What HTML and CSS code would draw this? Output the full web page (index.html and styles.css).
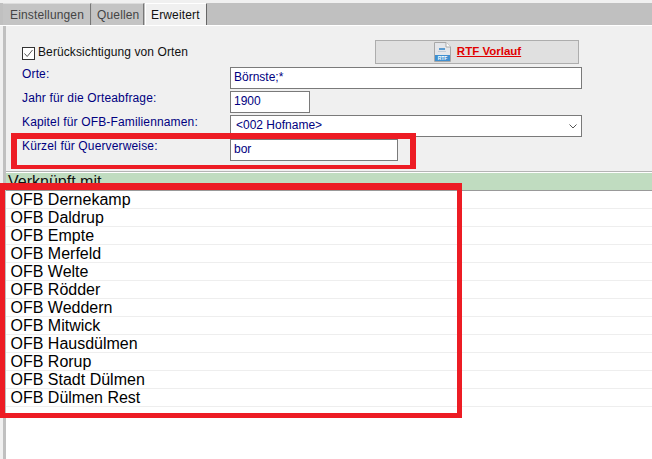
FILE: index.html
```html
<!DOCTYPE html>
<html>

<head>
    <title>Erweitert</title>
    <link rel="stylesheet" href="styles.css">
</head>

<body>
    <div class="tabbar">
        <div class="tab">Einstellungen</div>
        <div class="tab quellen">Quellen</div>
        <div class="tab active">Erweitert</div>
    </div>
    <div class="page">
        <div class="settings">
            <div class="toprow">
                <label class="check">
                    <svg class="checkbox" width="13" height="13" viewBox="0 0 13 13">
                        <rect x="0.5" y="0.5" width="12" height="12" fill="#fff" stroke="#333"></rect>
                        <path d="M2.5 6.5 L5.2 9.5 L10.5 3" fill="none" stroke="#555" stroke-width="1"></path>
                    </svg>
                    <span>Berücksichtigung von Orten</span>
                </label>
                <button class="rtfbutton">
                    <svg width="17" height="20" viewBox="0 0 17 20">
                        <path d="M0.5 0.5 H12 L16.5 5 V19.5 H0.5 Z" fill="#e4e6ea" stroke="#a8a8a8"></path>
                        <path d="M12 0.5 V5 H16.5" fill="#fff" stroke="#a8a8a8"></path>
                        <rect x="5" y="6" width="6" height="2" fill="#5a9bd0"></rect>
                        <rect x="4" y="9" width="8" height="1" fill="#c4ccd6"></rect>
                        <rect x="1" y="13" width="15" height="6" fill="#3f8fd0"></rect>
                        <text x="8.5" y="18" class="icontext">RTF</text>
                    </svg>
                    <span>RTF Vorlauf</span>
                </button>
            </div>
            <div class="field">
                <label>Orte:</label>
                <div class="input wide">Börnste;*</div>
            </div>
            <div class="field">
                <label>Jahr für die Orteabfrage:</label>
                <div class="input short">1900</div>
            </div>
            <div class="field">
                <label>Kapitel für OFB-Familiennamen:</label>
                <div class="input wide select">
                    <span>&lt;002 Hofname&gt;</span>
                    <svg width="8" height="5" viewBox="0 0 8 5">
                        <path d="M0.5 0.5 L4 4 L7.5 0.5" fill="none" stroke="#555" stroke-width="1"></path>
                    </svg>
                </div>
            </div>
            <div class="field">
                <label>Kürzel für Querverweise:</label>
                <div class="input medium">bor</div>
            </div>
        </div>
        <div class="listhead">Verknüpft mit</div>
        <div class="list">
            <div class="row">OFB Dernekamp</div>
            <div class="row">OFB Daldrup</div>
            <div class="row">OFB Empte</div>
            <div class="row">OFB Merfeld</div>
            <div class="row">OFB Welte</div>
            <div class="row">OFB Rödder</div>
            <div class="row">OFB Weddern</div>
            <div class="row">OFB Mitwick</div>
            <div class="row">OFB Hausdülmen</div>
            <div class="row">OFB Rorup</div>
            <div class="row">OFB Stadt Dülmen</div>
            <div class="row">OFB Dülmen Rest</div>
        </div>
    </div>
    <div class="mark mark1"></div>
    <div class="mark mark2"></div>
</body>

</html>
```

FILE: styles.css
```css
* {
    font-family: "Liberation Sans", Arial, sans-serif;
    box-sizing: border-box;
}

html,
body {
    margin: 0;
    height: 459px;
    overflow: hidden;
}

body {
    position: relative;
    background-color: #f0f0f0;
    font-size: 12px;
    padding-top: 3px;
}

.tabbar {
    display: flex;
    height: 23px;
    padding-left: 3px;
    background-color: #c0c0c0;
    border-bottom: 1px solid #fff;
}

.tab {
    height: 22px;
    padding: 4px 0 0 7px;
    width: 88px;
    margin-right: 1px;
    color: #444;
    background-color: #c4c4c4;
    border-right: 1px solid #777;
    border-top: 1px solid #ddd;
    letter-spacing: 0.15px;
}

.quellen {
    width: 52px;
    margin-right: 1px;
    padding-left: 5px;
}

.active {
    width: 62px;
    padding-left: 5px;
    color: #111;
    background-color: #f0f0f0;
    border-left: 1px solid #fff;
    border-top: 1px solid #fff;
    border-right: 1px solid #666;
}

.page {
    margin-left: 3px;
    height: 433px;
    border-left: 3px solid #c0c0c0;
    background-color: #fff;
}

.settings {
    height: 146px;
    background-color: #f0f0f0;
    padding: 14px 0 0 16px;
    border-bottom: 1px solid #b4b4b4;
}

.toprow {
    display: flex;
    height: 27px;
    align-items: flex-start;
}

.check {
    display: flex;
    align-items: center;
    gap: 3px;
    width: 353px;
    height: 13px;
    margin-top: 7px;
    color: #111;
    letter-spacing: 0.1px;
}

.check span {
    margin-top: -4px;
}

.rtfbutton {
    display: flex;
    align-items: center;
    justify-content: center;
    gap: 6px;
    width: 204px;
    height: 24px;
    padding: 0 0 0 1px;
    background-color: #e0e0e0;
    border: 1px solid #adadad;
}

.rtfbutton span {
    margin-top: -2px;
    color: #e00000;
    font-size: 11.5px;
    font-weight: 700;
    text-decoration: underline;
}

.icontext {
    fill: #fff;
    font-size: 5px;
    font-weight: 700;
    text-anchor: middle;
}

.field {
    display: flex;
    height: 24px;
}

.field label {
    width: 208px;
    color: #000080;
    letter-spacing: 0.15px;
}

.input {
    height: 22px;
    padding: 2px 0 0 3px;
    background-color: #fff;
    border: 1px solid #7a7a7a;
    color: #000080;
}

.wide {
    width: 352px;
}

.short {
    width: 80px;
}

.medium {
    width: 168px;
}

.select {
    display: flex;
    justify-content: space-between;
    align-items: center;
    padding: 0 4px 0 5px;
}

.select span {
    margin-top: -2px;
}

.listhead {
    height: 18px;
    margin-top: 1px;
    padding: 0 0 0 2px;
    background-color: #c0dcc0;
    border-bottom: 1px solid #999;
    font-size: 16px;
    line-height: 17px;
    color: #111;
}

.row {
    height: 18px;
    padding-left: 4.5px;
    border-bottom: 1px solid #eee;
    font-size: 16px;
    line-height: 17px;
    color: #000;
}

.mark {
    position: absolute;
    border-style: solid;
    border-color: #ed1c24;
}

.mark1 {
    left: 11px;
    top: 133px;
    width: 405px;
    height: 36px;
    border-width: 6px 6px 4px 6px;
}

.mark2 {
    left: 0;
    top: 183px;
    width: 462px;
    height: 235px;
    border-width: 7px 5px 5px 5px;
}
```
